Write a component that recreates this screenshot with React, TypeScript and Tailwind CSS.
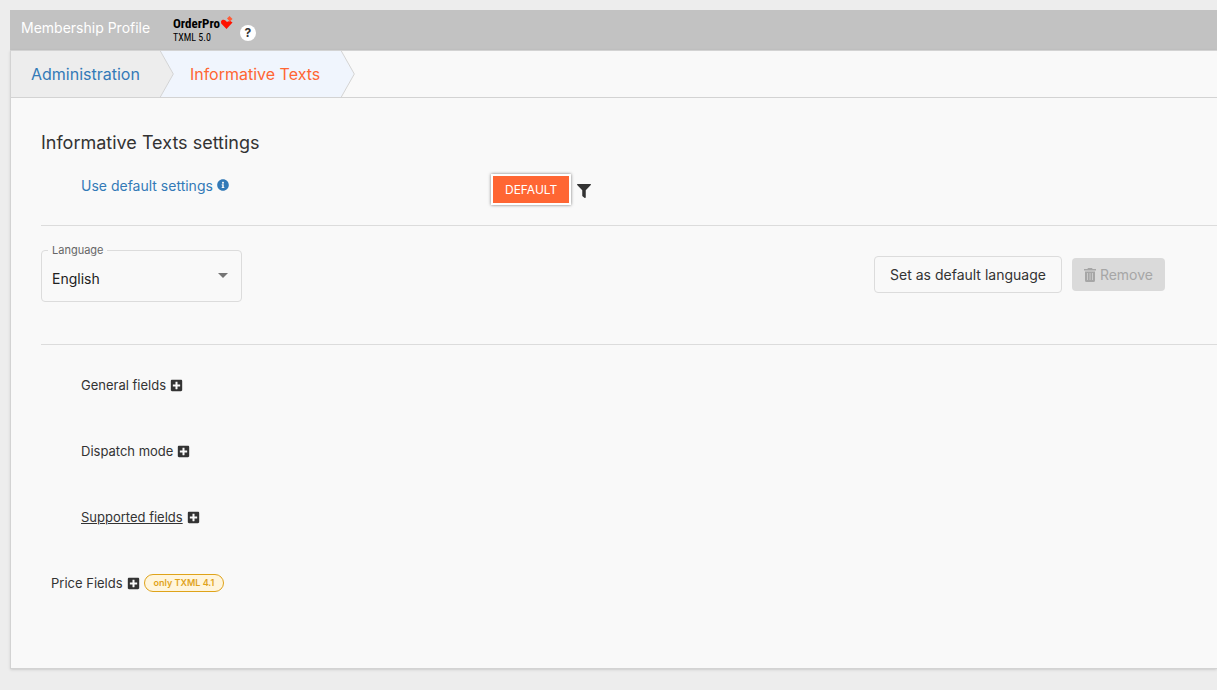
import React from 'react';
import { FaFilter, FaInfoCircle, FaPlusSquare } from 'react-icons/fa';

interface FieldGroup {
  key: string;
  label: string;
  className: string;
  badge?: string;
}

const fieldGroups: FieldGroup[] = [
  { key: 'general', label: 'General fields', className: 'pl-10' },
  { key: 'dispatch', label: 'Dispatch mode', className: 'pl-10' },
  { key: 'supported', label: 'Supported fields', className: 'pl-10 underline' },
  { key: 'price', label: 'Price Fields', className: 'pl-2.5', badge: 'only TXML 4.1' },
];

const languages = ['English'];

const Arrow = ({ fill, next }: { fill: string; next: string }) => (
  <svg width="14" height="46" viewBox="0 0 14 46" className="shrink-0" aria-hidden="true">
    <rect width="14" height="46" fill={next} />
    <path d="M0 0 L13 23 L0 46 Z" fill={fill} />
    <path d="M0.3 0 L13.3 23 L0.3 46" fill="none" stroke="#d3d3d3" />
  </svg>
);

const TrashIcon = () => (
  <svg width="12" height="14" viewBox="0 0 12 14" aria-hidden="true">
    <path d="M4 0h4l.6 1H12v1.500H0V1h3.400z" fill="currentColor" />
    <path
      fillRule="evenodd"
      d="M1 3.500h10V12.500a1.500 1.500 0 0 1-1.500 1.500h-7A1.500 1.500 0 0 1 1 12.500zM3 5v7h.7V5zM5.700 5v7h.7V5zM8.300 5v7h.7V5z"
      fill="currentColor"
    />
  </svg>
);

const Header = () => (
  <header className="flex h-10 items-start bg-[#c2c2c2]">
    <h1 className="w-[163px] pt-2 pl-[11px] text-sm leading-5 text-white">Membership Profile</h1>
    <div className="pt-1.5 font-['Roboto_Condensed','Open_Sans_Condensed','Roboto',sans-serif] text-black">
      <div className="flex items-start">
        <span className="text-[13px] leading-4 font-bold">OrderPro</span>
        <svg width="13" height="14" viewBox="0 0 13 14" aria-hidden="true">
          <path d="M1 5.500 C1.500 3.500 4 3 5.500 4.500 L7 6 L9.500 4.500 L12.500 6.500 L6.500 13 L1.200 7.500 Z" fill="#ff1200" />
          <path d="M9.500 0 L12.500 3 L9.800 5.500 L7 2.500 Z" fill="#ff5a36" />
          <path d="M6.500 3 L9.500 6" stroke="#c2c2c2" strokeWidth="0.5" />
        </svg>
      </div>
      <div className="text-[10px] leading-3">TXML 5.0</div>
    </div>
    <button
      type="button"
      aria-label="Help"
      className="mt-[15px] ml-[7px] flex size-4 items-center justify-center rounded-full bg-white text-xs leading-4 font-bold text-[#333]"
    >
      ?
    </button>
  </header>
);

const Breadcrumb = () => (
  <nav className="flex h-[48px] border-y border-[#d3d3d3] text-base" aria-label="Breadcrumb">
    <a href="#administration" className="flex items-center bg-[#ededed] px-5 text-[#337ab7]">
      Administration
    </a>
    <Arrow fill="#ededed" next="#f0f5fd" />
    <a href="#texts" className="flex items-center bg-[#f0f5fd] pr-[21px] pl-4 text-[#ff6633]" aria-current="page">
      Informative Texts
    </a>
    <Arrow fill="#f0f5fd" next="#f9f9f9" />
  </nav>
);

const LanguageSelect = () => (
  <fieldset className="relative h-[58px] w-[201px] rounded border border-[#dcdcdc] pl-1.5">
    <legend className="px-1 text-[11px] leading-3 text-[#666]">
      <label htmlFor="language">Language</label>
    </legend>
    <select id="language" className="h-[46px] w-full appearance-none bg-transparent pl-1 text-sm text-[#212121]">
      {languages.map((language) => (
        <option key={language}>{language}</option>
      ))}
    </select>
    <svg width="10" height="5" viewBox="0 0 10 5" className="pointer-events-none absolute top-[17px] right-[13px]" aria-hidden="true">
      <path d="M0 0h10L5 5z" fill="#757575" />
    </svg>
  </fieldset>
);

const App = () => {
  return (
    <div className="min-h-screen bg-[#ededed] pt-2.5 pb-5 pl-2.5 font-['Inter','Liberation_Sans',sans-serif] text-[#333]">
      <Header />
      <main className="border-b border-l border-[#d3d3d3] bg-[#f9f9f9] pb-[75px] shadow-sm">
        <Breadcrumb />
        <section className="pt-[31px] pl-[30px]">
          <h2 className="text-lg leading-7">Informative Texts settings</h2>
          <div className="flex items-start border-b border-[#dcdcdc] pt-[15px] pb-[19px] pl-10">
            <div className="flex h-[34px] w-[410px] items-start gap-1 text-sm leading-7 text-[#337ab7]">
              <span>Use default settings</span>
              <FaInfoCircle size={12} className="mt-[7px]" />
            </div>
            <button
              type="button"
              className="mt-0.5 h-[31px] border-2 border-white bg-[#ff6633] px-3 text-xs text-white shadow-[0_0_3px_#777]"
            >
              DEFAULT
            </button>
            <button type="button" aria-label="Filter" className="mt-3 ml-1.5">
              <FaFilter size={14} />
            </button>
          </div>

          <div className="flex items-start justify-between border-b border-[#dcdcdc] pt-[18px] pr-[52px] pb-[42px]">
            <LanguageSelect />
            <div className="flex items-center gap-2.5 pt-3 text-sm">
              <button type="button" className="h-[37px] rounded border border-[#dcdcdc] px-[15px]">
                Set as default language
              </button>
              <button type="button" disabled className="flex h-[33px] items-center gap-1 rounded bg-[#dadada] px-3 text-[#a6a6a6]">
                <TrashIcon />
                Remove
              </button>
            </div>
          </div>

          <div className="flex flex-col gap-[46px] pt-[30px] text-[13px] leading-5">
            {fieldGroups.map((group) => (
              <div key={group.key} className="flex items-center">
                <button type="button" className={group.className}>
                  {group.label}
                </button>
                <FaPlusSquare size={13} className="ml-1" />
                {group.badge && (
                  <span className="ml-1 rounded-full border border-[#dfa31a] bg-[#fff5dc] px-[9px] text-[9px] leading-4 font-semibold text-[#dfa31a]">
                    {group.badge}
                  </span>
                )}
              </div>
            ))}
          </div>
        </section>
      </main>
    </div>
  );
};
export default App;
